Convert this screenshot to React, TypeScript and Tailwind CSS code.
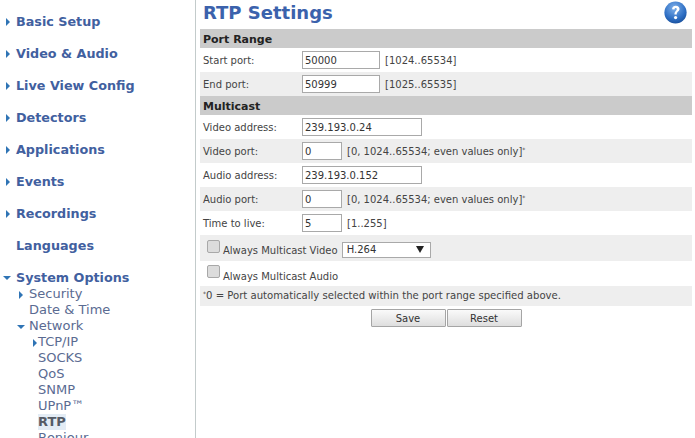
const font = "[font-family:'DejaVu_Sans',Verdana,sans-serif]";

function Tri({ open, className = "" }: { open?: boolean; className?: string }) {
  return (
    <svg width="8" height="8" viewBox="0 0 8 8" className={"shrink-0 " + className}>
      {open ? <path d="M0 2 H8 L4 6 Z" fill="#2f74b5" /> : <path d="M2 0 V8 L6 4 Z" fill="#2f74b5" />}
    </svg>
  );
}

function Top({ label, tri = true, open = false }: { label: string; tri?: boolean; open?: boolean }) {
  return (
    <div className="flex h-8 items-center">
      <div className={open ? "flex w-4 pl-[3px]" : "flex w-4 pl-[4px]"}>{tri && <Tri open={open} />}</div>
      <span className="text-[12.75px] font-bold text-[#41609f]">{label}</span>
    </div>
  );
}

function Sub({ label, pad, active }: { label: string; pad: string; active?: boolean }) {
  return (
    <div className={"flex h-4 items-center " + pad}>
      <span className={active ? "bg-[#e3ecf5] text-[13px] font-bold leading-4 text-[#555b66]" : "text-[13px] leading-4 text-[#5a6b92]"}>{label}</span>
    </div>
  );
}

function Sidebar() {
  return (
    <aside className="h-[438px] w-[196px] shrink-0 overflow-hidden border-r border-[#c3cbcb] pt-[6px]">
      <Top label="Basic Setup" />
      <Top label="Video & Audio" />
      <Top label="Live View Config" />
      <Top label="Detectors" />
      <Top label="Applications" />
      <Top label="Events" />
      <Top label="Recordings" />
      <Top label="Languages" tri={false} />
      <Top label="System Options" open />
      <div className="-mt-2">
        <div className="flex h-4 items-center pl-[17px]"><Tri className="mr-[4px] mt-0.5" /><span className="text-[13px] text-[#5a6b92]">Security</span></div>
        <Sub label="Date & Time" pad="pl-[29px]" />
        <div className="flex h-4 items-center pl-[17px]"><Tri open className="mr-1 mt-0.5" /><span className="text-[13px] text-[#5a6b92]">Network</span></div>
        <div className="flex h-4 items-center pl-[31px]"><Tri className="-mr-[1px] mt-0.5" /><span className="text-[13px] text-[#5a6b92]">TCP/IP</span></div>
        <Sub label="SOCKS" pad="pl-[38px]" />
        <Sub label="QoS" pad="pl-[38px]" />
        <Sub label="SNMP" pad="pl-[38px]" />
        <Sub label="UPnP™" pad="pl-[38px]" />
        <Sub label="RTP" pad="pl-[38px]" active />
        <Sub label="Bonjour" pad="pl-[38px]" />
      </div>
    </aside>
  );
}

function Head({ children }: { children: string }) {
  return <div className="flex h-[19px] items-center bg-[#cbcbcb] pl-[3px] pt-[3px] text-[11px] font-bold text-[#222]">{children}</div>;
}

function Box({ value, w }: { value: string; w: string }) {
  return (
    <input
      readOnly
      value={value}
      className={"h-[18px] border border-[#a9a9a9] bg-white pl-[2px] text-[10px] text-[#333] outline-none " + w + " " + font}
    />
  );
}

function Row({ label, grey, value, w, hint, star }: { label: string; grey?: boolean; value: string; w: string; hint?: string; star?: boolean }) {
  return (
    <div className={"flex h-6 items-center " + (grey ? "bg-[#eeeeee]" : "")}>
      <span className="w-[102px] pl-[3px] pt-[1px] text-[10px] text-[#444]">{label}</span>
      <Box value={value} w={w} />
      {hint && (
        <span className="ml-[5px] pt-[1px] text-[10px] text-[#444]">
          {hint}
          {star && <sup className="text-[6px]">*</sup>}
        </span>
      )}
    </div>
  );
}

function Check({ label, children, grey }: { label: string; children?: React.ReactNode; grey?: boolean }) {
  return (
    <div className={"flex items-center pl-[7px] " + (grey ? "h-[26px] bg-[#eeeeee]" : "h-[25px]")}>
      <span className="-mt-1 mr-[3px] h-[13px] w-[13px] rounded-[2px] border border-[#a8a8a8] bg-[#dcdcdc]" />
      <span className="mt-[5px] text-[10px] text-[#444]">{label}</span>
      {children}
    </div>
  );
}

function HelpIcon() {
  return (
    <svg width="23" height="23" viewBox="0 0 24 24">
      <defs>
        <radialGradient id="h" cx="45%" cy="30%" r="75%">
          <stop offset="0%" stopColor="#7fb0ea" />
          <stop offset="65%" stopColor="#2e6fc4" />
          <stop offset="100%" stopColor="#164b96" />
        </radialGradient>
      </defs>
      <circle cx="12" cy="12" r="11.6" fill="url(#h)" />
      <path d="M8.4 8.6 C8.6 6 10.4 5 12.3 5 C14.8 5 16.2 6.5 16.2 8.4 C16.2 10.8 13.3 11 13.3 14 L10.9 14 C10.9 10.6 13.3 10.2 13.3 8.6 C13.3 7.7 12.9 7.2 12.1 7.2 C11.3 7.2 10.9 7.9 10.9 8.9 Z" fill="#fff" />
      <circle cx="12.1" cy="17.3" r="1.7" fill="#fff" />
    </svg>
  );
}

function Btn({ label }: { label: string }) {
  return (
    <button className={"h-[18px] w-[75px] rounded-[1px] border border-[#a5a5a5] bg-gradient-to-b from-[#fafafa] to-[#dedede] text-[10px] text-[#333] " + font}>
      {label}
    </button>
  );
}

export default function App() {
  return (
    <div className={"flex h-[438px] w-[695px] overflow-hidden bg-white " + font}>
      <Sidebar />
      <main className="ml-1 w-[492px]">
        <div className="flex h-[29px] items-center justify-between">
          <h1 className="mb-1 pl-[3px] text-[18px] font-bold leading-none text-[#3b62ac]">RTP Settings</h1>
          <div className="mb-[5px] mr-[5px]"><HelpIcon /></div>
        </div>
        <Head>Port Range</Head>
        <Row label="Start port:" value="50000" w="w-[78px]" hint="[1024..65534]" />
        <Row label="End port:" grey value="50999" w="w-[78px]" hint="[1025..65535]" />
        <Head>Multicast</Head>
        <Row label="Video address:" value="239.193.0.24" w="w-[120px]" />
        <Row label="Video port:" grey value="0" w="w-10" hint="[0, 1024..65534; even values only]" star />
        <Row label="Audio address:" value="239.193.0.152" w="w-[120px]" />
        <Row label="Audio port:" grey value="0" w="w-10" hint="[0, 1024..65534; even values only]" star />
        <Row label="Time to live:" value="5" w="w-10" hint="[1..255]" />
        <Check label="Always Multicast Video" grey>
          <div className="ml-1 mt-[3px] flex h-4 w-[89px] items-center justify-between border border-[#a9a9a9] bg-white pl-[4px] pr-[6px] text-[10px] text-[#333]">
            <span>H.264</span>
            <svg width="8" height="7" viewBox="0 0 8 7"><path d="M0 0 H8 L4 7 Z" fill="#222" /></svg>
          </div>
        </Check>
        <Check label="Always Multicast Audio" />
        <div className="flex h-5 items-center bg-[#eeeeee] pl-[3px] text-[10.1px] text-[#444]">
          <span><sup className="text-[6px]">*</sup>0 = Port automatically selected within the port range specified above.</span>
        </div>
        <div className="mt-[3px] flex justify-center gap-px">
          <Btn label="Save" />
          <Btn label="Reset" />
        </div>
      </main>
    </div>
  );
}
